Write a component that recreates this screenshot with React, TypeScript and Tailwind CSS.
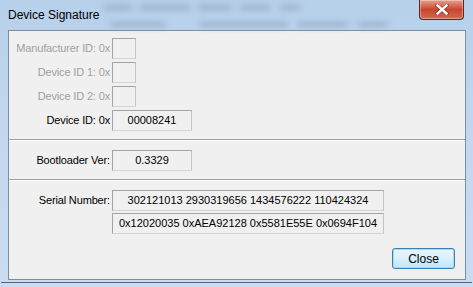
import React from "react";

const font = "font-['Liberation_Sans',Arial,sans-serif]";

function Field({ value, width }: { value?: string; width: string }) {
  return (
    <div
      className={`${width} h-[21px] ml-[2px] flex items-center justify-center border border-t-[#a3a3a3] border-l-[#a3a3a3] border-r-[#c4c4c4] border-b-[#d4d4d4] bg-[#f0f0f0] text-[11px] text-black whitespace-nowrap`}
    >
      {value}
    </div>
  );
}

function Row({ label, value, width, disabled }: { label: string; value?: string; width: string; disabled?: boolean }) {
  return (
    <div className="flex items-center h-[21px]">
      <span className={`w-[101px] text-right text-[11px] tracking-[-0.15px] whitespace-nowrap ${disabled ? "text-[#a0a0a0]" : "text-black"}`}>
        {label}
      </span>
      <Field value={value} width={width} />
    </div>
  );
}

function Separator({ top }: { top: string }) {
  return <div className={`${top} h-[2px] border-t border-t-[#a0a0a0] border-b border-b-white`} />;
}

export default function App() {
  return (
    <div className={`${font} relative w-[473px] h-[287px] overflow-hidden bg-gradient-to-b from-[#b7d0ea] via-[#c3d8ef] to-[#c9dcf1]`}>
      {/* blurred content seen through the glass */}
      <div className="absolute left-[100px] top-[1px] w-[315px] h-[28px] overflow-hidden pointer-events-none blur-[3px] opacity-70">
        <div className="absolute left-[4px] top-[4px] w-[28px] h-[5px] bg-[#8fa2ba]" />
        <div className="absolute left-[40px] top-[4px] w-[50px] h-[5px] bg-[#8fa2ba]" />
        <div className="absolute left-[98px] top-[4px] w-[34px] h-[5px] bg-[#8fa2ba]" />
        <div className="absolute left-[140px] top-[4px] w-[30px] h-[5px] bg-[#8fa2ba]" />
        <div className="absolute left-[180px] top-[4px] w-[20px] h-[5px] bg-[#8fa2ba]" />
        <div className="absolute left-[10px] top-[21px] w-[55px] h-[5px] bg-[#8fa2ba]" />
        <div className="absolute left-[100px] top-[21px] w-[88px] h-[5px] bg-[#8fa2ba]" />
        <div className="absolute left-[198px] top-[21px] w-[50px] h-[5px] bg-[#8fa2ba]" />
        <div className="absolute left-[258px] top-[21px] w-[30px] h-[5px] bg-[#8fa2ba]" />
      </div>

      {/* title bar */}
      <div className="relative h-[30px] flex items-center pl-[8px]">
        <span className="text-[12px] text-black">Device Signature</span>
      </div>

      {/* caption close button */}
      <div className="absolute top-0 right-[9px] w-[45px] h-[20px] rounded-b-[4px] border border-t-0 border-[#5e2620] bg-gradient-to-b from-[#e7a08e] via-[#c8452c] to-[#d36a52] flex items-center justify-center shadow-[inset_0_0_0_1px_rgba(255,255,255,0.35)]">
        <svg width="14" height="11" viewBox="0 0 14 11">
          <path d="M2 1.5 L12 9.5 M12 1.5 L2 9.5" stroke="#5a1d16" strokeWidth="3.6" strokeLinecap="square" opacity="0.5" />
          <path d="M2.5 1.5 L11.5 9.5 M11.5 1.5 L2.5 9.5" stroke="#ffffff" strokeWidth="2.4" strokeLinecap="square" />
        </svg>
      </div>

      {/* client area */}
      <div className="ml-[8px] w-[458px] h-[250px] border border-[#7d8ea4] bg-[#f0f0f0] flex flex-col">
        <div className="pt-[7px] flex flex-col gap-[3px]">
          <Row label="Manufacturer ID: 0x" width="w-[24px]" disabled />
          <Row label="Device ID 1: 0x" width="w-[24px]" disabled />
          <Row label="Device ID 2: 0x" width="w-[24px]" disabled />
          <Row label="Device ID: 0x" value="00008241" width="w-[80px]" />
        </div>

        <Separator top="mt-[8px]" />

        <div className="mt-[9px]">
          <Row label="Bootloader Ver:" value="0.3329" width="w-[80px]" />
        </div>

        <Separator top="mt-[8px]" />

        <div className="mt-[9px] flex flex-col gap-[2px]">
          <Row label="Serial Number:" value="302121013 2930319656 1434576222 110424324" width="w-[272px]" />
          <div className="flex items-center h-[21px]">
            <span className="w-[101px]" />
            <Field value="0x12020035 0xAEA92128 0x5581E55E 0x0694F104" width="w-[272px]" />
          </div>
        </div>

        <div className="mt-[14px] flex justify-end pr-[10px]">
          <button className="w-[63px] h-[21px] rounded-[3px] border border-[#3c7fb1] bg-gradient-to-b from-[#eaf6fd] via-[#d9f0fc] to-[#bee6fd] shadow-[inset_0_0_0_1px_#a7d9f5] text-[12px] text-black flex items-center justify-center">
            Close
          </button>
        </div>
      </div>

      {/* bottom frame edge */}
      <div className="mt-[2px] mx-[1px] h-[1px] bg-[#55657a]" />
    </div>
  );
}
